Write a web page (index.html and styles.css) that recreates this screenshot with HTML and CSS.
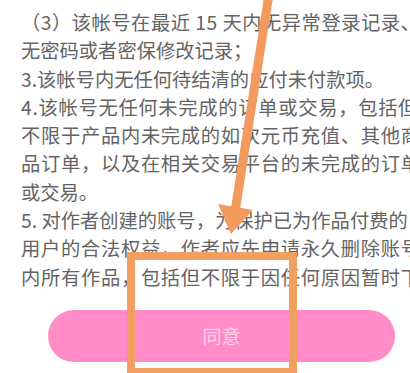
FILE: index.html
```html
<!DOCTYPE html>
<html lang="zh-CN">
<head>
<meta charset="utf-8">
<title>注销账号须知</title>
<link rel="stylesheet" href="styles.css">
</head>
<body>
<div class="page">
  <div class="notice">
    <div class="line first">（3）该帐号在最近 15 天内无异常登录记录、</div>
    <div class="line">无密码或者密保修改记录；</div>
    <div class="line">3.该帐号内无任何待结清的应付未付款项。</div>
    <div class="line wide">4.该帐号无任何未完成的订单或交易，包括但</div>
    <div class="line wide">不限于产品内未完成的如次元币充值、其他商</div>
    <div class="line wide">品订单，以及在相关交易平台的未完成的订单</div>
    <div class="line">或交易。</div>
    <div class="line">5. 对作者创建的账号，为保护已为作品付费的</div>
    <div class="line wide">用户的合法权益，作者应先申请永久删除账号</div>
    <div class="line wide">内所有作品，包括但不限于因任何原因暂时下</div>
  </div>
  <div class="agree">同意</div>

  <div class="highlight"></div>
  <svg class="arrow" width="410" height="373" viewBox="0 0 410 373">
    <line x1="269" y1="-6" x2="235" y2="212" stroke="#F39B5E" stroke-width="9"/>
    <polygon points="218,204 253,210 231,234" fill="#F39B5E"/>
  </svg>
</div>
</body>
</html>
```

FILE: styles.css
```css
html, body {
  margin: 0;
  padding: 0;
  background: #ffffff;
}

.page {
  position: relative;
  width: 410px;
  height: 373px;
  overflow: hidden;
  font-family: "Noto Sans CJK SC", "Noto Sans", sans-serif;
}

.notice {
  padding: 8px 0 0 21px;
  color: #646464;
  font-size: 19.3px;
  line-height: 28.3px;
}

.line {
  white-space: nowrap;
}

.line.first {
  letter-spacing: 0.5px;
}

.line.wide {
  letter-spacing: 0.7px;
}

.agree {
  display: flex;
  align-items: center;
  justify-content: center;
  margin: 19px 0 0 48px;
  width: 347px;
  height: 52px;
  border-radius: 26px;
  background: #ff8cc6;
  color: rgba(255, 255, 255, 0.62);
  font-size: 19px;
}

.highlight {
  position: absolute;
  left: 127px;
  top: 252px;
  width: 170px;
  height: 124px;
  box-sizing: border-box;
  border: 8px solid #f2a062;
}

.arrow {
  position: absolute;
  left: 0;
  top: 0;
}
```
